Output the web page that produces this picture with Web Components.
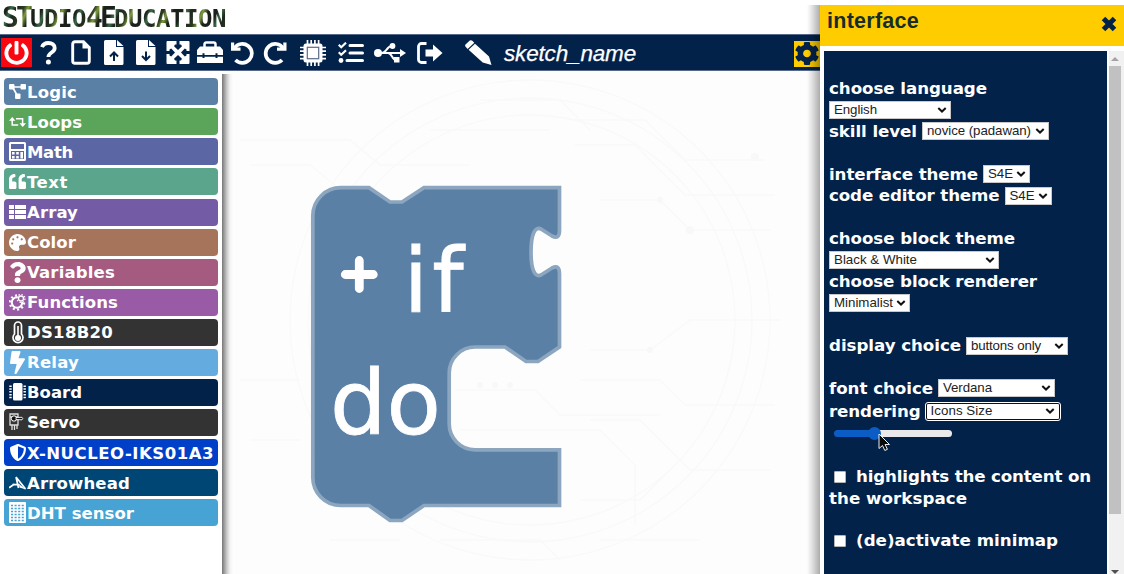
<!DOCTYPE html>
<html lang="en">
<head>
<meta charset="utf-8">
<title>STudio4Education</title>
<style>
html,body{margin:0;height:574px;overflow:hidden;background:#fff;font-family:"DejaVu Sans",Verdana,sans-serif}
</style>
</head>
<body>
<s4e-app></s4e-app>
<script>
const FA = {
power:['0 0 512 512','<path d="M400 54.1c63 45 104 118.6 104 201.9 0 136.8-110.8 247.7-247.5 248C120 504.3 8.2 393 8 256.4 7.9 173.1 48.9 99.3 111.8 54.2c11.7-8.3 28-4.8 35 7.7L162.6 90c5.9 10.5 3.1 23.8-6.6 31-41.5 30.8-68 79.6-68 134.9-.1 92.3 74.5 168.1 168 168.1 91.6 0 168.6-74.2 168-169.1-.3-51.8-24.7-101.8-68.1-134-9.7-7.2-12.4-20.5-6.5-30.9l15.8-28.1c7-12.4 23.2-16.1 34.8-7.8zM296 264V24c0-13.3-10.7-24-24-24h-32c-13.3 0-24 10.7-24 24v240c0 13.3 10.7 24 24 24h32c13.3 0 24-10.7 24-24z"/>'],
question:['20 0 364 512','<path d="M202.021 0C122.202 0 70.503 32.703 29.914 91.026c-7.363 10.58-5.093 25.086 5.178 32.874l43.138 32.709c10.373 7.865 25.132 6.026 33.253-4.148 25.049-31.381 43.63-49.449 82.757-49.449 30.764 0 68.816 19.799 68.816 49.631 0 22.552-18.617 34.134-48.993 51.164-35.423 19.86-82.299 44.576-82.299 106.405V320c0 13.255 10.745 24 24 24h72.471c13.255 0 24-10.745 24-24v-5.773c0-42.86 125.268-44.645 125.268-160.627C377.504 66.256 286.902 0 202.021 0zM192 373.459c-38.196 0-69.271 31.075-69.271 69.271 0 38.195 31.075 69.27 69.271 69.27s69.271-31.075 69.271-69.271-31.075-69.27-69.271-69.27z"/>'],
help:['0 0 17 24','<path d="M2 6.2C3 3.2 5.2 2 8.4 2c3.700 0 6.300 1.900 6.300 4.900 0 4.800-6.300 4.300-6.300 9.100" fill="none" stroke="#fff" stroke-width="3.800"/><circle cx="8.400" cy="21" r="2.500"/>'],
file:['0 0 20 25','<path d="M4 1.700h8.500l5.800 5.800V21a2.300 2.300 0 0 1-2.300 2.300H4A2.300 2.300 0 0 1 1.700 21V4A2.300 2.300 0 0 1 4 1.700z" fill="none" stroke="#fff" stroke-width="2.900"/><path d="M11.500 1.500h2L19 7v1.500h-7.500z"/>'],
fup:['0 0 20 25','<path d="M1.500 0H12v7h7.500v16.500A1.500 1.500 0 0 1 18 25H1.500A1.500 1.500 0 0 1 0 23.500v-22A1.500 1.500 0 0 1 1.500 0zM13 0l6.500 6H13z"/><path d="M10 21v-8M6 16.500l4-4 4 4" fill="none" stroke="#02224a" stroke-width="2"/>'],
fdown:['0 0 20 25','<path d="M1.500 0H12v7h7.500v16.500A1.500 1.500 0 0 1 18 25H1.500A1.500 1.500 0 0 1 0 23.500v-22A1.500 1.500 0 0 1 1.500 0zM13 0l6.500 6H13z"/><path d="M10 11.500v8M6 16l4 4 4-4" fill="none" stroke="#02224a" stroke-width="2"/>'],
expand:['0 0 24 23','<rect x=".5" width="23" height="23" rx="1"/><path d="M10.500 0h3v3.500h1.500l1 1.700-4 3.800-4-3.800 1-1.700h1.500zM10.500 23h3v-3.500h1.500l1-1.700-4-3.800-4 3.800 1 1.700h1.500zM0 10h3.500V8.500l1.700-1L9 11.500l-3.800 4-1.700-1V13H0zM24 10h-3.500V8.500l-1.700-1L15 11.500l3.800 4 1.700-1V13H24z" fill="#02224a"/>'],
toolbox:['0 0 26 23','<path d="M7.500 6V3.200A1.700 1.700 0 0 1 9.200 1.500h7.600a1.700 1.700 0 0 1 1.700 1.700V6" fill="none" stroke="#fff" stroke-width="2.500"/><path d="M3 5.500h20l3 3.500v5h-5.500v-1.700h-2V14h-11v-1.700h-2V14H0V9zM0 15.700h5.500V17h2v-1.300h11V17h2v-1.300H26V22H0z"/>'],
undo:['0 0 23 24','<path d="M3.500 7a9.500 9.500 0 1 1 1 12" fill="none" stroke="#fff" stroke-width="3.700"/><path d="M0 1.500h3.200v5h6.300v3.300H0z"/>'],
redo:['0 0 24 24','<path d="M20 7a9.500 9.500 0 1 0-1 12" fill="none" stroke="#fff" stroke-width="3.700"/><path d="M23.500 1.500h-3.200v5H14v3.300h9.500z"/>'],
chip:['0 0 26 26','<path d="M7.500 0v26M11.200 0v26M14.900 0v26M18.600 0v26M0 7.500h26M0 11.200h26M0 14.900h26M0 18.600h26" stroke="#fff" stroke-width="1.700"/><rect x="3.500" y="3.500" width="19" height="19" rx="2.500"/><rect x="7.300" y="7.300" width="11.400" height="11.400" fill="none" stroke="#5a6c88" stroke-width="1.200"/>'],
tasks:['0 0 26 22','<path d="M12 3.500h12.500M12 11h12.500M9 18.500h15.500" stroke="#fff" stroke-width="3" stroke-linecap="round"/><path d="M.7 2.700l2.500 2.500L8 .7M.7 10.200l2.500 2.500L8 8.200" fill="none" stroke="#fff" stroke-width="2.200"/><circle cx="3" cy="18.500" r="2.400"/>'],
usb:['0 0 32 20','<path d="M4 10h24M8 10c4 0 5-7 10-7M14 10c4 0 4 7 8 7" fill="none" stroke="#fff" stroke-width="2"/><circle cx="4" cy="10" r="4"/><circle cx="18.500" cy="3" r="2.900"/><rect x="20" y="14" width="5.500" height="5.500"/><path d="M26 6l6 4-6 4z"/>'],
exit:['0 0 26 22','<path d="M9.500 1.500H4.500a3 3 0 0 0-3 3v13a3 3 0 0 0 3 3h5" fill="none" stroke="#fff" stroke-width="2.800"/><path d="M8.500 7.500H16V2.500l9.500 8.500L16 19.500v-5H8.500z"/>'],
pencil:['0 0 27 25','<path d="M.5 4.500L4.800.6q1.300-1 2.500.2l2 2L2.700 9 .8 7q-1.200-1.200-.3-2.500zM10 3.800l14 12.700L26.500 25l-8.800-2.400L3.600 9.800z"/>'],
gear:['10 8 492 496','<path d="M487.4 315.7l-42.6-24.6c4.3-23.2 4.3-47 0-70.2l42.6-24.6c4.900-2.800 7.100-8.600 5.500-14-11.100-35.600-30-67.800-54.700-94.600-3.800-4.100-10-5.100-14.800-2.300L380.800 110c-17.900-15.400-38.500-27.300-60.800-35.100V25.800c0-5.600-3.900-10.500-9.400-11.700-36.700-8.200-74.300-7.800-109.200 0-5.500 1.200-9.400 6.100-9.400 11.700V75c-22.200 7.900-42.800 19.800-60.800 35.100L88.700 85.500c-4.900-2.800-11-1.900-14.800 2.300-24.700 26.700-43.600 58.900-54.700 94.600-1.700 5.400.6 11.200 5.500 14L67.300 221c-4.300 23.200-4.300 47 0 70.200l-42.600 24.600c-4.900 2.800-7.100 8.600-5.500 14 11.100 35.600 30 67.800 54.700 94.600 3.800 4.100 10 5.100 14.800 2.300l42.600-24.600c17.900 15.400 38.500 27.300 60.800 35.100v49.200c0 5.600 3.900 10.500 9.400 11.700 36.700 8.200 74.300 7.800 109.200 0 5.500-1.200 9.400-6.100 9.400-11.700v-49.200c22.200-7.900 42.800-19.800 60.800-35.100l42.600 24.600c4.900 2.800 11 1.900 14.800-2.300 24.700-26.700 43.600-58.900 54.700-94.600 1.500-5.500-.7-11.300-5.600-14.100zM256 336c-44.100 0-80-35.900-80-80s35.900-80 80-80 80 35.900 80 80-35.900 80-80 80z"/>'],
close:['0 0 16 16','<path d="M2.500 2.500l11 11M13.500 2.500l-11 11" stroke="#02224a" stroke-width="5"/>'],
logic:['0 0 17 15','<path d="M3 3h11M3.500 3l5 9" stroke="#fff" stroke-width="1.700"/><rect x="0" y="0" width="5.500" height="5.500" rx="1"/><rect x="11.500" y="0" width="5.500" height="5.500" rx="1"/><rect x="6" y="9.500" width="5.500" height="5.500" rx="1"/>'],
loops:['0 0 17 10','<path d="M3.200 3v5h6M7 1.700h6.600v5.500" fill="none" stroke="#fff" stroke-width="1.500"/><path d="M0 3.800L3.200 0l3.200 3.800zM10.500 6.200l3.200 3.800L17 6.200z"/>'],
math:['0 0 17 19','<path fill-rule="evenodd" d="M1.500 0h14A1.500 1.500 0 0 1 17 1.500v16a1.500 1.500 0 0 1-1.500 1.500h-14A1.500 1.500 0 0 1 0 17.500v-16A1.500 1.500 0 0 1 1.500 0zM2 2v5h13V2zM2 9h13v8H2z"/><path d="M3 10h2.600v2.600H3zM7.200 10h2.600v2.600H7.200zM11.400 10H14v2.600h-2.600zM3 13.900h2.600v2.600H3zM7.200 13.900h2.600v2.600H7.200zM11.400 11H14v5.500h-2.600z"/>'],
quote:['0 32 512 448','<path d="M464 256h-80v-64c0-35.3 28.7-64 64-64h8c13.300 0 24-10.700 24-24V56c0-13.300-10.700-24-24-24h-8c-88.400 0-160 71.600-160 160v240c0 26.500 21.500 48 48 48h128c26.500 0 48-21.500 48-48V304c0-26.500-21.500-48-48-48zm-288 0H96v-64c0-35.300 28.700-64 64-64h8c13.300 0 24-10.700 24-24V56c0-13.300-10.700-24-24-24h-8C71.600 32 0 103.600 0 192v240c0 26.500 21.500 48 48 48h128c26.500 0 48-21.500 48-48V304c0-26.500-21.500-48-48-48z"/>'],
array:['0 0 17 14','<path d="M0 0h5v4H0zM6 0h11v4H6zM0 5h5v4H0zM6 5h11v4H6zM0 10h5v4H0zM6 10h11v4H6z"/>'],
palette:['0 0 512 512','<path d="M204.3 5C104.9 24.4 24.8 104.3 5.2 203.4c-37 187 131.7 326.4 258.8 306.7 41.2-6.4 61.4-54.6 42.5-91.7-23.1-45.4 9.9-98.4 60.9-98.4h79.7c35.8 0 64.8-29.6 64.9-65.3C511.500 97.1 368.1-26.900 204.300 5zM96 320c-17.700 0-32-14.300-32-32s14.300-32 32-32 32 14.300 32 32-14.300 32-32 32zm32-128c-17.700 0-32-14.300-32-32s14.300-32 32-32 32 14.300 32 32-14.300 32-32 32zm128-64c-17.700 0-32-14.300-32-32s14.300-32 32-32 32 14.300 32 32-14.300 32-32 32zm128 64c-17.700 0-32-14.300-32-32s14.300-32 32-32 32 14.300 32 32-14.300 32-32 32z"/>'],
func:['0 0 17 18','<circle cx="8" cy="9.500" r="5.200" fill="none" stroke="#fff" stroke-width="2"/><circle cx="8" cy="9.500" r="7.100" fill="none" stroke="#fff" stroke-width="2.200" stroke-dasharray="2 2.460"/><circle cx="12" cy="5.500" r="3.600" fill="#995ba5"/><circle cx="12" cy="5.500" r="2.500" fill="none" stroke="#fff" stroke-width="1.300"/><circle cx="12" cy="5.500" r="4" fill="none" stroke="#fff" stroke-width="1.200" stroke-dasharray="1.400 1.740"/>'],
thermo:['0 0 12 23','<path d="M2.500 13V4.500a3.500 3.500 0 0 1 7 0V13a5 5 0 1 1-7 0z" fill="none" stroke="#fff" stroke-width="1.700"/><path d="M6 5v12" stroke="#fff" stroke-width="1.600"/><circle cx="6" cy="17" r="3"/>'],
bolt:['0 0 320 512','<path d="M296 160H180.6l42.6-129.8C227.2 15 215.7 0 200 0H56C44 0 33.8 8.9 32.2 20.8l-32 240C-1.7 275.2 9.5 288 24 288h118.700L96.600 482.500c-3.600 15.200 8 29.500 23.300 29.500 8.400 0 16.400-4.400 20.800-12l176-304c9.300-15.900-2.200-36-20.700-36z"/>'],
board:['0 0 17 18','<rect x="4" y="0" width="9.500" height="17.500" rx="1.500"/><path d="M1.500 2.500v13M15.700 2.500v13" stroke="#fff" stroke-width="2.400" stroke-dasharray="1.500 1.300"/>'],
servo:['0 0 17 18','<path d="M1 1h8v11H1zM1 4h8M3 12v5M5.500 12v5M8 12v4" fill="none" stroke="#ddd" stroke-width="1.300"/><circle cx="5" cy="5.500" r="2.700" fill="#111" stroke="#fff"/><path d="M7 4.500l6-.2q1.500 1.200 0 2.500l-6-.2z" fill="#111" stroke="#fff" stroke-width=".9"/>'],
shield:['16 0 480 512','<path d="M466.500 83.700l-192-80a48.150 48.150 0 0 0-36.900 0l-192 80C27.700 91.100 16 108.600 16 128c0 198.500 114.500 335.700 221.500 380.300 11.800 4.900 25.100 4.900 36.900 0C360.100 472.600 496 349.300 496 128c0-19.400-11.700-36.900-29.500-44.300zM256.100 446.300l-.1-381 175.900 73.300c-3.300 151.400-82.100 261.100-175.800 307.700z"/>'],
arrow:['0 0 17 14','<path d="M0 11.800L5.500 8M3.500 8.700h7M7 1l2.500 11M7 1l9.500 12" fill="none" stroke="#fff" stroke-width="1.700"/><path d="M10 8l7 5.500-6.500-2z"/>'],
dht:['0 0 17 21','<rect width="17" height="21" rx="1"/><path d="M2 3.500h13M2 6.500h13M2 9.500h13M2 12.500h13M2 15.500h13M2 18.500h13" stroke="#47a3d4" stroke-width="1.500" stroke-dasharray="2.100 1.470"/>']
};

class S4eIcon extends HTMLElement{
  connectedCallback(){
    const [vb,body]=FA[this.getAttribute('name')];
    const w=this.getAttribute('w'),h=this.getAttribute('h');
    const r=this.attachShadow({mode:'open'});
    r.innerHTML=`<style>:host{display:block;flex:none;width:${w}px;height:${h}px}svg{display:block}</style>
    <svg width="${w}" height="${h}" viewBox="${vb}" preserveAspectRatio="none" fill="currentColor">${body}</svg>`;
  }
}
customElements.define('s4e-icon',S4eIcon);

/* A run of text whose tracking is adjusted to fill a given width. */
class FitText extends HTMLElement{
  connectedCallback(){
    const r=this.attachShadow({mode:'open'});
    r.innerHTML='<style>:host{display:block;flex:none;white-space:nowrap}span{display:inline-block}</style><span><slot></slot></span>';
    const s=r.querySelector('span'),n=this.textContent.length,w=+this.getAttribute('w');
    s.style.letterSpacing=((w-s.getBoundingClientRect().width)/n)+'px';
  }
}
customElements.define('fit-text',FitText);

class S4eLogo extends HTMLElement{
  connectedCallback(){
    this.attachShadow({mode:'open'}).innerHTML=`<style>
    :host{display:block;height:34px;padding:0 0 0 2px;box-sizing:border-box;background:#fff}
    div{width:228px;font:bold 24px/35px "DejaVu Sans Mono",monospace;letter-spacing:-.45px;white-space:nowrap;color:transparent;
      background:repeating-linear-gradient(115deg,#1a211b 0 8px,#3b6b46 12px,#1d261e 16px,#2c3a20 23px,#7c9c3c 27px,#1b221b 32px);-webkit-background-clip:text;background-clip:text}
    .b{font-size:28px;letter-spacing:-2.860px}
    </style><div><span class="b">ST</span>UDIO<span class="b">4E</span>DUCATION</div>`;
  }
}
customElements.define('s4e-logo',S4eLogo);

class S4eToolbar extends HTMLElement{
  connectedCallback(){
    const items=[['help',17,24,8],['file',20,25,14],['fup',20,25,13],['fdown',20,25,12],['expand',24,23,10],['toolbox',26,23,7],['undo',23,24,8],['redo',24,24,9],['chip',26,26,13],['tasks',26,22,12],['usb',32,20,10],['exit',26,22,11],['pencil',27,25,22]];
    this.attachShadow({mode:'open'}).innerHTML=`<style>
    :host{display:flex;align-items:center;height:37px;box-sizing:border-box;background:#02224a;color:#fff;padding-left:1px;border-top:1px solid #56698a;border-bottom:1px solid #56698a;flex:none}
    .power{display:flex;align-items:center;justify-content:center;width:31px;height:29px;background:#f80710}
    .name{font:italic 22.500px/30px "Liberation Sans",sans-serif;margin:3px 0 0 12px;-webkit-text-stroke:.25px #fff}
    .cfg{margin-left:auto;display:flex;align-items:center;justify-content:center;width:26px;height:26px;background:#fc0;color:#02224a;margin-top:2px}
    </style><div class="power"><s4e-icon name="power" w="25" h="24"></s4e-icon></div>
    ${items.map(([n,w,h,m])=>`<s4e-icon name="${n}" w="${w}" h="${h}" style="margin-left:${m}px"></s4e-icon>`).join('')}
    <fit-text class="name" w="132">sketch_name</fit-text>
    <div class="cfg"><s4e-icon name="gear" w="24" h="23"></s4e-icon></div>`;
  }
}
customElements.define('s4e-toolbar',S4eToolbar);

class S4eCategory extends HTMLElement{
  connectedCallback(){
    const a=n=>this.getAttribute(n);
    this.attachShadow({mode:'open'}).innerHTML=`<style>
    :host{display:flex;align-items:center;height:27px;border-radius:4px;background:${a('color')};color:#fff;box-sizing:border-box;padding-left:4px}
    .i{width:19px;display:flex;justify-content:center}
    fit-text{font:bold 16.500px/27px "DejaVu Sans",sans-serif;padding-top:1px}
    </style><div class="i"><s4e-icon name="${a('icon')}" w="${a('iw')}" h="${a('ih')}"></s4e-icon></div><fit-text w="${a('w')}">${a('label')}</fit-text>`;
  }
}
customElements.define('s4e-category',S4eCategory);

class S4eToolbox extends HTMLElement{
  connectedCallback(){
    const c=[['Logic','#5b80a5','logic',17,15,50],['Loops','#5ba55b','loops',17,10,55],['Math','#5b67a5','math',17,19,46],['Text','#5ba58c','quote',17,15,41],['Array','#745ba5','array',17,14,51],['Color','#a5745b','palette',17,17,49],['Variables','#a55b80','question',16,21,88],['Functions','#995ba5','func',17,18,91],['DS18B20','#333333','thermo',12,23,86],['Relay','#64ace0','bolt',15,23,52],['Board','#02224a','board',17,18,55],['Servo','#333333','servo',17,18,53],['X-NUCLEO-IKS01A3','#0040c8','shield',16,17,187],['Arrowhead','#004675','arrow',17,14,103],['DHT sensor','#47a3d4','dht',17,21,107]];
    this.attachShadow({mode:'open'}).innerHTML=`<style>
    :host{display:flex;flex-direction:column;gap:3.070px;width:222px;box-sizing:border-box;padding:7.300px 4px 0;background:#fff;flex:none}
    </style>${c.map(([l,k,i,w,h,t])=>`<s4e-category label="${l}" color="${k}" icon="${i}" iw="${w}" ih="${h}" w="${t}"></s4e-category>`).join('')}`;
  }
}
customElements.define('s4e-toolbox',S4eToolbox);

class S4eWorkspace extends HTMLElement{
  connectedCallback(){
    this.attachShadow({mode:'open'}).innerHTML=`<style>
    :host{display:block;flex:1;min-width:0;overflow:hidden;background:linear-gradient(90deg,#777 0,#999 2px,#ccc 5px,#f2f2f2 8px,#fdfdfd 11px) no-repeat 0 3px #fdfdfd}
    svg{display:block}text{font-family:"DejaVu Sans",sans-serif;font-size:89px;fill:#fff}
    </style>
    <svg width="598" height="503" viewBox="222 71 598 503">
      <g fill="none" stroke="#f9f9f9" stroke-width="1.300">
        <circle cx="530" cy="320" r="240"/><circle cx="530" cy="320" r="222"/><circle cx="530" cy="320" r="205"/>
        <path d="M240 140h110l30 25h90M250 165h60l25 20M575 120h70l40 40h80M575 145h60l50 50h90M600 200h60l30 30h80M590 350h60l40-30h90M580 380h80l25 25h90M590 420h50l50 50h80M455 390h80l25 25h100M460 430h140l35 35v60M240 380h60M250 440h50M580 500h60l30-30M600 540h100M440 540h100l20 20M330 540h70M480 100h80l30 30M430 130h120"/>
      </g>
      <g fill="#f8f8f8"><circle cx="755" cy="157" r="4"/><circle cx="660" cy="200" r="3"/><circle cx="690" cy="230" r="4"/><circle cx="650" cy="350" r="3"/><circle cx="480" cy="385" r="3"/><circle cx="495" cy="385" r="3"/><circle cx="510" cy="385" r="3"/></g>
      <path d="M312.800 216A28 28 0 0 1 341 187.700H369L390 202H402L424 187.700H559.500V230C559.500 237 557 238.500 552 236L541 229C535 226 531 234 531 252C531 270 535 278 541 275L552 268C557 265.500 559.500 267 559.500 274V347L538 361.500H526L505 347H475A26 26 0 0 0 449.200 373V424A26 26 0 0 0 475 449.800H559.500V505.500H424L402 520.500H390L369 505.500H341A28 28 0 0 1 312.800 477Z" fill="#5b80a5" stroke="#8ca6c0" stroke-width="3.700"/>
      <path d="M345.300 274.500H373.300M359.300 260.500V288.500" stroke="#fff" stroke-width="8.800" stroke-linecap="round"/>
      <g stroke="#fff" stroke-width=".8"><text x="403.500" y="311.700" textLength="60">if</text><text x="330" y="434">do</text></g>
    </svg>`;
  }
}
customElements.define('s4e-workspace',S4eWorkspace);

class S4eSelect extends HTMLElement{
  connectedCallback(){
    const f=this.hasAttribute('focused');
    this.attachShadow({mode:'open'}).innerHTML=`<style>
    :host{display:flex;align-items:center;justify-content:space-between;box-sizing:border-box;flex:none;height:${f?17:18}px;width:${this.getAttribute('box')}px;background:#fff;color:#222;border:1px solid #c8c8c8;padding:0 ${f?4:3}px 0 4px;font:13.300px/16px "Liberation Sans",sans-serif;${f?'border-radius:2px;border-color:#101010;outline:1.500px solid #fff;outline-offset:0':''}}
    </style><fit-text w="${this.getAttribute('w')}">${this.getAttribute('value')}</fit-text>
    <svg width="10" height="6" viewBox="0 0 10 6"><path d="M1.300 1L5 4.500 8.700 1" fill="none" stroke="#111" stroke-width="2"/></svg>`;
  }
}
customElements.define('s4e-select',S4eSelect);

class S4eRow extends HTMLElement{
  connectedCallback(){
    this.attachShadow({mode:'open'}).innerHTML=`<style>
    :host{display:flex;align-items:center;height:21.600px;font:bold 16.700px/21px "DejaVu Sans",sans-serif;color:#fff}
    :host([gap]){margin-top:21px}
    ::slotted(s4e-select:not(:first-child)){margin-left:5px}
    </style><slot></slot>`;
  }
}
customElements.define('s4e-row',S4eRow);

class S4eCheck extends HTMLElement{
  connectedCallback(){
    this.attachShadow({mode:'open'}).innerHTML=`<style>:host{display:block;width:12px;height:12px;box-sizing:border-box;border:1px solid #b5b5b5;border-radius:1px;background:#fff;margin:1px 10.500px 0 4.500px}</style>`;
  }
}
customElements.define('s4e-check',S4eCheck);

class S4eSlider extends HTMLElement{
  connectedCallback(){
    this.attachShadow({mode:'open'}).innerHTML=`<style>
    :host{display:block;position:relative;width:118px;height:7px;border-radius:4px;margin-left:5px;background:linear-gradient(90deg,#0b5cc4 0 40px,#e9e9eb 40px)}
    i{position:absolute;left:34px;top:-3px;width:13px;height:13px;border-radius:50%;background:#0b5cc4}
    svg{position:absolute;left:44px;top:3px;z-index:3}
    </style><i></i><svg width="13" height="19" viewBox="0 0 13 19"><path d="M1 1v14.500l3.500-3 2.300 5 2.600-1.200-2.300-4.800H11.500z" fill="#0a0a0a" stroke="#eee" stroke-width="1"/></svg>`;
  }
}
customElements.define('s4e-slider',S4eSlider);

class S4ePanel extends HTMLElement{
  connectedCallback(){
    this.attachShadow({mode:'open'}).innerHTML=`<style>
    :host{display:flex;flex-direction:column;width:304px;height:569px;margin-top:5px;flex:none;background:#fff;z-index:2;position:relative}
    :host::before{content:"";position:absolute;left:-13px;top:0;bottom:0;width:13px;background:linear-gradient(90deg,rgba(0,0,0,0),rgba(0,0,0,.1) 35%,rgba(0,0,0,.32))}
    header{display:flex;justify-content:space-between;height:40.500px;box-sizing:border-box;background:#fc0;color:#02224a;padding:0 7px 0 7px;flex:none}
    header fit-text{font:bold 21.500px/33px "Liberation Sans",sans-serif;color:#172d2c}
    header s4e-icon{margin-top:11px}
    main{display:flex;flex:1;min-height:0;margin:5px 0 0 4px}
    section{width:283px;background:#02224a;padding:27px 0 0 5px;box-sizing:border-box;overflow:hidden;flex:none}
    aside{width:15px;margin-left:2px;background:#f1f1f1;display:flex;flex-direction:column;align-items:center;padding:6px 3px 0 0;box-sizing:border-box}
    .t{width:12px;height:448px;background:#c1c1c1;margin:5px 0 56px}
    aside svg{flex:none}
    </style>
    <header><fit-text w="92">interface</fit-text><s4e-icon name="close" w="16" h="16"></s4e-icon></header>
    <main><section>
    <s4e-row><fit-text w="158">choose language</fit-text></s4e-row>
    <s4e-row><s4e-select box="122" w="43" value="English"></s4e-select></s4e-row>
    <s4e-row><fit-text w="88">skill level</fit-text><s4e-select box="127" w="104" value="novice (padawan)"></s4e-select></s4e-row>
    <s4e-row gap><fit-text w="149">interface theme</fit-text><s4e-select box="47" w="25" value="S4E"></s4e-select></s4e-row>
    <s4e-row><fit-text w="170.500">code editor theme</fit-text><s4e-select box="47" w="25" value="S4E"></s4e-select></s4e-row>
    <s4e-row gap><fit-text w="186">choose block theme</fit-text></s4e-row>
    <s4e-row><s4e-select box="170" w="83" value="Black &amp; White"></s4e-select></s4e-row>
    <s4e-row><fit-text w="208">choose block renderer</fit-text></s4e-row>
    <s4e-row><s4e-select box="81" w="59" value="Minimalist"></s4e-select></s4e-row>
    <s4e-row gap><fit-text w="132">display choice</fit-text><s4e-select box="102" w="70" value="buttons only"></s4e-select></s4e-row>
    <s4e-row gap><fit-text w="104">font choice</fit-text><s4e-select box="117" w="49" value="Verdana"></s4e-select></s4e-row>
    <s4e-row style="height:24px"><fit-text w="91.500">rendering</fit-text><s4e-select focused box="134" w="62" value="Icons Size"></s4e-select></s4e-row>
    <s4e-row><s4e-slider></s4e-slider></s4e-row>
    <s4e-row gap><s4e-check></s4e-check><fit-text w="235">highlights the content on</fit-text></s4e-row>
    <s4e-row><fit-text w="138">the workspace</fit-text></s4e-row>
    <s4e-row gap><s4e-check></s4e-check><fit-text w="202">(de)activate minimap</fit-text></s4e-row>
    </section>
    <aside><svg width="8" height="4"><path d="M0 4L4 0 8 4z" fill="#a3a3a3"/></svg><div class="t"></div><svg width="8" height="4"><path d="M0 0h8L4 4z" fill="#505050"/></svg></aside></main>`;
  }
}
customElements.define('s4e-panel',S4ePanel);

class S4eApp extends HTMLElement{
  connectedCallback(){
    this.attachShadow({mode:'open'}).innerHTML=`<style>
    :host{display:flex;width:1124px;height:574px;overflow:hidden;background:#fff}
    .left{display:flex;flex-direction:column;width:820px;flex:none}
    .work{display:flex;flex:1;min-height:0}
    </style><div class="left"><s4e-logo></s4e-logo><s4e-toolbar></s4e-toolbar><div class="work"><s4e-toolbox></s4e-toolbox><s4e-workspace></s4e-workspace></div></div><s4e-panel></s4e-panel>`;
  }
}
customElements.define('s4e-app',S4eApp);
</script>
</body>
</html>
